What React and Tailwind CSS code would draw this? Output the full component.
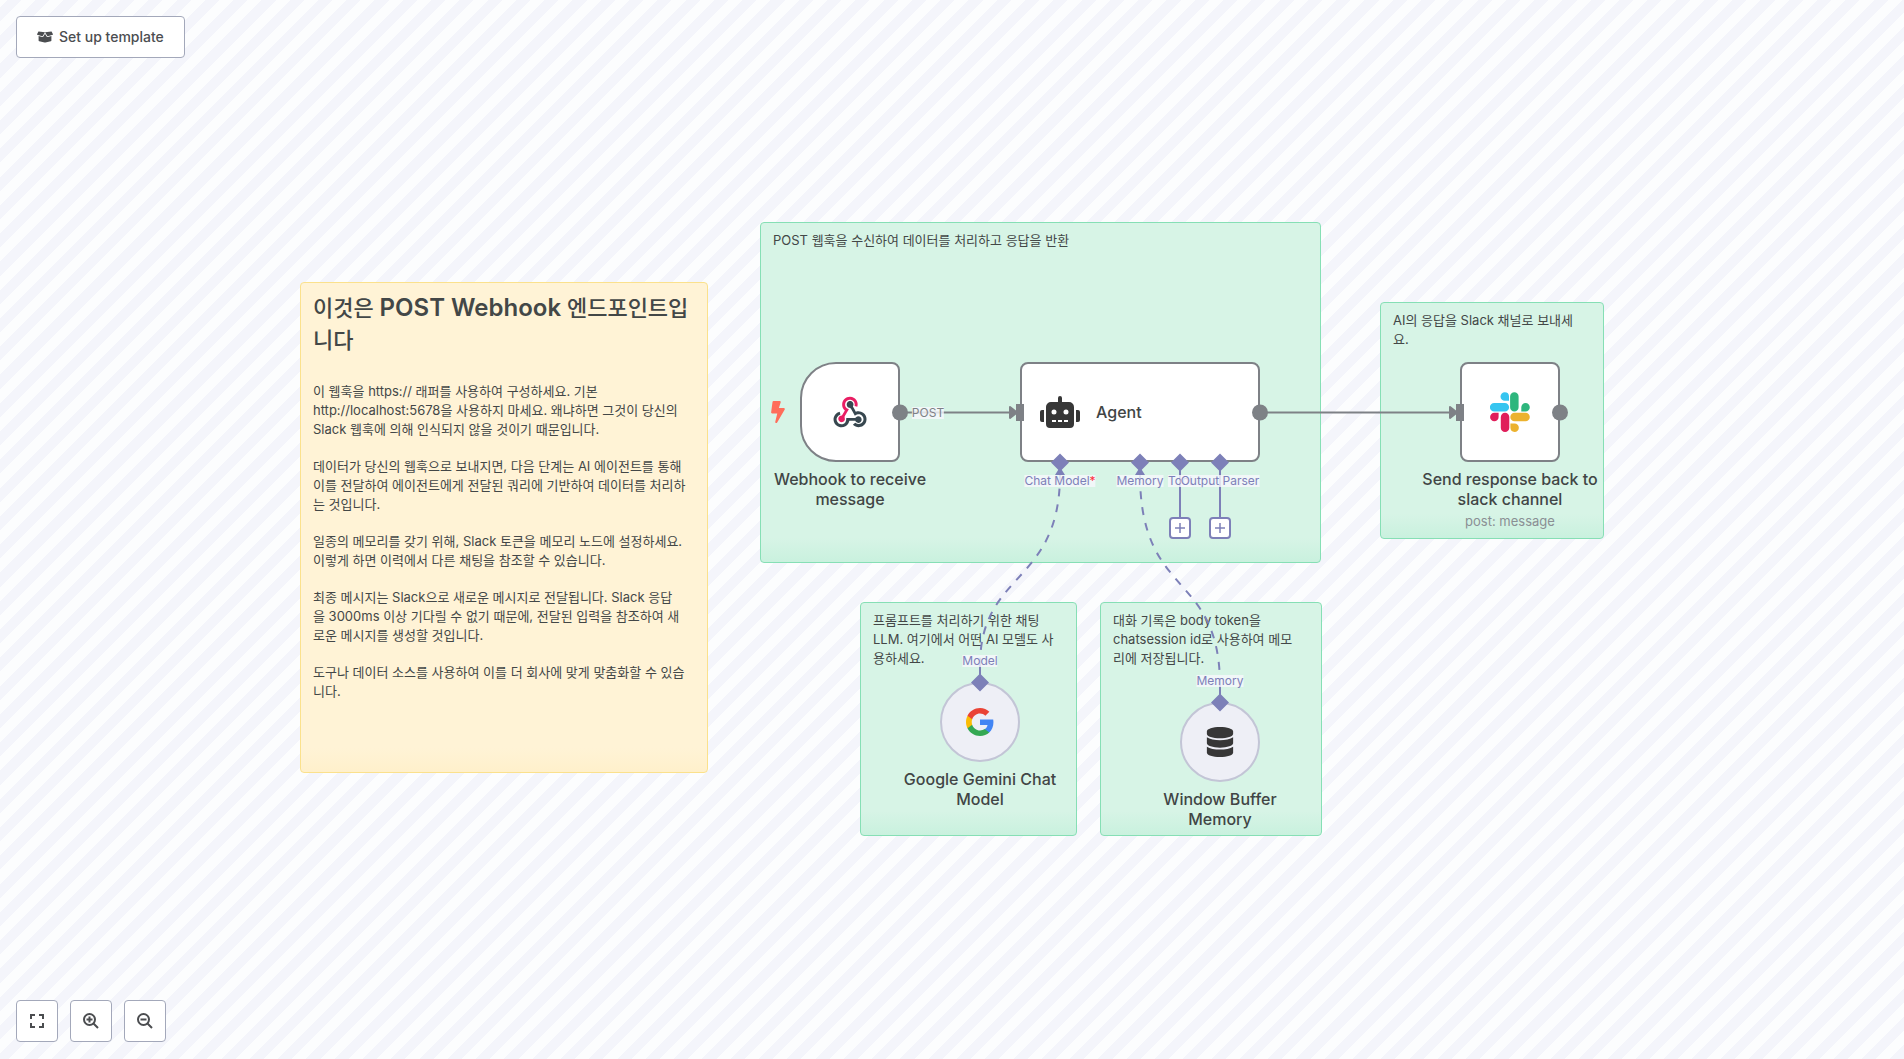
import { FaBoxOpen, FaBolt, FaRobot, FaDatabase } from "react-icons/fa";

const GREEN =
  "border-[#86dfb5] bg-[linear-gradient(to_top,#c9f1de,#d7f4e6_24px)] px-3 py-2";
const YELLOW =
  "border-[#fbe18c] bg-[linear-gradient(to_top,#fff0cb,#fff3d6_24px)] pt-[9px] px-3";
const BOX = "flex h-[100px] items-center rounded-lg border-2 border-[#7e8186] bg-white";
const CIRCLE =
  "flex size-20 items-center justify-center rounded-full border-2 border-[#c3c5d6] bg-[#eeeff6]";

function Note({ className, paragraphs, title }) {
  return (
    <section
      className={`absolute rounded border text-[13px] leading-[19px] text-[#434747] ${className}`}
    >
      {title}
      <div className="flex flex-col gap-[18px] whitespace-pre-line">
        {paragraphs.map((text) => (
          <p key={text}>{text}</p>
        ))}
      </div>
    </section>
  );
}

function Node({ className, title, subtitle, children }) {
  return (
    <article
      className={`absolute flex w-44 -translate-x-1/2 flex-col items-center gap-[7px] text-center text-base leading-5 font-medium text-[#414545] ${className}`}
    >
      {children}
      <div>
        <h2>{title}</h2>
        {subtitle && (
          <p className="mt-1 text-[13px] leading-4 font-normal text-[#8a8f94]">{subtitle}</p>
        )}
      </div>
    </article>
  );
}

function PortLabel({ className, children }) {
  return (
    <span
      className={`absolute -translate-x-1/2 -translate-y-1/2 bg-[#f7f8fc]/80 text-xs leading-3 whitespace-nowrap ${className}`}
    >
      {children}
    </span>
  );
}

function WebhookIcon() {
  return (
    <svg viewBox="0 0 256 240" className="w-[34px]" aria-hidden="true">
      <path
        fill="#e91e63"
        d="M119.5 100.5c-10.1 17-19.9 33.600-29.900 50-2.500 4.200-3.800 7.700-1.800 13 5.600 14.700-2.300 29-17.100 32.900-14 3.700-27.600-5.500-30.400-20.500-2.500-13.300 7.800-26.300 22.400-28.400 1.200-.2 2.500-.2 4.500-.4l22.300-37.400C75.500 95.800 67.100 79.500 69 59.300c1.300-14.300 6.900-26.700 17.200-36.800 19.700-19.400 49.700-22.500 72.900-7.600 22.300 14.300 32.500 42.200 23.800 66.100l-20.400-5.500c2.700-13.300.7-25.200-8.300-35.400-5.900-6.800-13.500-10.300-22.200-11.600-17.400-2.600-34.500 8.500-39.600 25.500-5.700 19.200 3 35 27.100 46.500z"
      />
      <path
        fill="#37474f"
        d="M149.800 79.400c7.300 12.900 14.700 25.900 22 38.800 37.100-11.500 65 9 75.100 31 12.100 26.600 3.800 58-20 74.400-24.400 16.800-55.400 13.900-77-7.700l17-14.300c21.500 13.900 40.200 13.200 54.100-3.200 11.900-14 11.600-34.900-.6-48.600-14.100-15.800-33-16.300-55.800-1.100-9.500-16.800-19.100-33.500-28.300-50.300-3.100-5.700-6.500-9-13.500-10.200-11.600-2-19.100-12-19.600-23.200-.4-11.100 6.100-21.100 16.300-25 10.100-3.900 22-.8 28.800 7.900 5.600 7 7.300 15 4.400 23.600-.8 2.400-1.900 4.700-2.900 7.900z"
      />
      <path
        fill="#37474f"
        d="M167.700 187.200h-44.600c-4.300 17.600-13.500 31.800-29.500 40.900-12.400 7-25.800 9.400-40 7.100C27.500 231 6.200 207.600 4.300 181.200c-2.100-30 18.500-56.600 45.900-62.600l5.700 20.700c-25.200 12.800-33.900 29-26.800 49.200 6.300 17.800 23.900 27.600 42.900 23.800 19.500-3.900 29.300-20 28.100-46.100 18.500 0 37-.2 55.400.1 7.200.1 12.800-.6 18.200-7 9-10.500 25.500-9.500 35.200.4 9.900 10.100 9.400 26.400-1 36.100-10.100 9.300-26 8.800-35.300-1.200-1.900-2.100-3.400-4.600-4.900-7.400z"
      />
    </svg>
  );
}

function SlackIcon() {
  return (
    <svg viewBox="0 0 40 40" className="size-10" aria-hidden="true">
      <path fill="#36c5f0" d="M14.800.2a4.300 4.300 0 0 0 0 8.600h4.200V4.500A4.300 4.300 0 0 0 14.800.2zM4.200 10.900h10.600a4.300 4.300 0 0 1 0 8.600H4.200a4.300 4.300 0 0 1 0-8.600z" />
      <path fill="#2eb67d" d="M39.800 15.200a4.200 4.200 0 0 0-8.500 0v4.300h4.200a4.300 4.300 0 0 0 4.300-4.300zM28.600 15.200V4.400a4.200 4.200 0 0 0-8.500 0v10.800a4.200 4.200 0 0 0 8.500 0z" />
      <path fill="#ecb22e" d="M24.600 39.900a4.200 4.200 0 0 0 0-8.500h-4.200v4.200a4.300 4.300 0 0 0 4.200 4.300zM24.600 29.300h10.900a4.300 4.300 0 0 0 0-8.600H24.600a4.300 4.300 0 0 0 0 8.600z" />
      <path fill="#e01e5a" d="M.1 25a4.200 4.200 0 0 0 8.500 0v-4.300H4.400A4.300 4.300 0 0 0 .1 25zM10.800 25v10.700a4.200 4.200 0 0 0 8.500 0V25a4.200 4.200 0 0 0-8.500 0z" />
    </svg>
  );
}

function GoogleIcon() {
  return (
    <svg viewBox="1 1 22 22" className="size-7" aria-hidden="true">
      <path fill="#4285f4" d="M22.560 12.250c0-.78-.07-1.530-.2-2.250H12v4.260h5.920c-.26 1.370-1.040 2.530-2.210 3.310v2.770h3.570c2.080-1.920 3.280-4.740 3.280-8.090z" />
      <path fill="#34a853" d="M12 23c2.970 0 5.460-.98 7.280-2.660l-3.570-2.770c-.98.66-2.230 1.060-3.710 1.060-2.860 0-5.290-1.930-6.160-4.530H2.180v2.840C3.990 20.530 7.700 23 12 23z" />
      <path fill="#fbbc05" d="M5.840 14.090c-.22-.66-.35-1.360-.35-2.090s.13-1.430.35-2.090V7.070H2.180C1.430 8.550 1 10.220 1 12s.43 3.450 1.180 4.930l3.660-2.840z" />
      <path fill="#ea4335" d="M12 5.380c1.620 0 3.060.56 4.210 1.640l3.150-3.150C17.450 2.090 14.970 1 12 1 7.700 1 3.990 3.470 2.180 7.070l3.660 2.840c.87-2.600 3.300-4.530 6.160-4.530z" />
    </svg>
  );
}

function Connections() {
  return (
    <svg className="pointer-events-none absolute top-0 left-0 h-[1059px] w-[1904px]" fill="none" aria-hidden="true">
      <g stroke="#7e8186" strokeWidth="2">
        <path d="M900 412.500H1012M1260 412.500H1452" />
      </g>
      <g fill="#7e8186">
        <path d="M1010 407l7 5.500-7 5.500zM1450 407l7 5.500-7 5.500z" stroke="#7e8186" strokeWidth="2" strokeLinejoin="round" />
        <rect x="1016" y="404" width="8" height="17" />
        <rect x="1456" y="404" width="8" height="17" />
        <circle cx="900" cy="412.500" r="8" />
        <circle cx="1260" cy="412.500" r="8" />
        <circle cx="1560" cy="412.500" r="8" />
      </g>
      <g stroke="#7d80b8" strokeWidth="2">
        <path strokeDasharray="8 8" d="M980 666C980 570 1060 586 1060 474M1220 686C1220 570 1140 600 1140 474" />
        <path d="M980 666V682M1220 686V702M1180 466V518M1220 466V518" />
      </g>
      <g fill="#7d80b8">
        <path d="M1060 453.500l9 9-9 9-9-9zM1140 453.500l9 9-9 9-9-9zM1180 453.500l9 9-9 9-9-9zM1220 453.500l9 9-9 9-9-9z" />
        <path d="M980 673.500l9 9-9 9-9-9zM1220 693.500l9 9-9 9-9-9z" />
        <path d="M1060 467l5 8h-10zM1140 467l5 8h-10z" />
      </g>
    </svg>
  );
}

function AddButton({ className, label }) {
  return (
    <button
      type="button"
      aria-label={label}
      className={`absolute flex size-[22px] items-center justify-center rounded border-2 border-[#7d80b8] bg-white text-[#7d80b8] ${className}`}
    >
      <svg viewBox="0 0 12 12" className="size-3" fill="none" stroke="currentColor" strokeWidth="1.500">
        <path d="M6 1v10M1 6h10" />
      </svg>
    </button>
  );
}

function ControlButton({ label, children }) {
  return (
    <button
      type="button"
      aria-label={label}
      className="flex size-[42px] items-center justify-center rounded border border-[#a3a8ba] bg-white text-[#4b4d50]"
    >
      {children}
    </button>
  );
}

export default function App() {
  return (
    <div className="relative flex min-h-screen flex-col justify-between overflow-hidden bg-[repeating-linear-gradient(-45deg,#f4f5fb_0px,#f4f5fb_10px,#fcfdfe_10px,#fcfdfe_20px)] px-4 pt-4 pb-[17px] font-[Inter,'Noto_Sans_CJK_KR',sans-serif]">
      <main className="absolute inset-0">
        <Note
          className={`top-[282px] left-[300px] h-[491px] w-[408px] ${YELLOW}`}
          title={
            <h1 className="mb-[26px] text-[22px] leading-8 font-medium">
              이것은 <span className="text-2xl leading-none font-semibold">POST Webhook</span> 엔드포인트입니다
            </h1>
          }
          paragraphs={[
            "이 웹훅을 https:// 래퍼를 사용하여 구성하세요. 기본 http://localhost:5678을 사용하지 마세요. 왜냐하면 그것이 당신의 Slack 웹훅에 의해 인식되지 않을 것이기 때문입니다.",
            "데이터가 당신의 웹훅으로 보내지면, 다음 단계는 AI 에이전트를 통해 이를 전달하여 에이전트에게 전달된 쿼리에 기반하여 데이터를 처리하는 것입니다.",
            "일종의 메모리를 갖기 위해, Slack 토큰을 메모리 노드에 설정하세요. 이렇게 하면 이력에서 다른 채팅을 참조할 수 있습니다.",
            "최종 메시지는 Slack으로 새로운 메시지로 전달됩니다. Slack 응답\n을 3000ms 이상 기다릴 수 없기 때문에, 전달된 입력을 참조하여 새\n로운 메시지를 생성할 것입니다.",
            "도구나 데이터 소스를 사용하여 이를 더 회사에 맞게 맞춤화할 수 있습\n니다.",
          ]}
        />
        <Note
          className={`top-[222px] left-[760px] h-[341px] w-[561px] ${GREEN}`}
          paragraphs={["POST 웹훅을 수신하여 데이터를 처리하고 응답을 반환"]}
        />
        <Note
          className={`top-[302px] left-[1380px] h-[237px] w-[224px] ${GREEN}`}
          paragraphs={["AI의 응답을 Slack 채널로 보내세\n요."]}
        />
        <Note
          className={`top-[602px] left-[860px] h-[234px] w-[217px] ${GREEN}`}
          paragraphs={["프롬프트를 처리하기 위한 채팅\nLLM. 여기에서 어떤 AI 모델도 사\n용하세요."]}
        />
        <Note
          className={`top-[602px] left-[1100px] h-[234px] w-[222px] ${GREEN}`}
          paragraphs={["대화 기록은 body token을\nchatsession id로 사용하여 메모\n리에 저장됩니다."]}
        />

        <FaBolt className="absolute top-[401px] left-[769px] h-[22px] w-[18px] text-[#ff6d5a]" />
        <Node className="top-[362px] left-[850px]" title="Webhook to receive message">
          <div className={`w-[100px] justify-center rounded-l-[36px] ${BOX}`}>
            <WebhookIcon />
          </div>
        </Node>
        <div
          className={`absolute top-[362px] left-[1020px] w-60 gap-4 pl-[18px] text-base font-medium text-[#414545] ${BOX}`}
        >
          <FaRobot className="size-10 text-[#373737]" />
          <h2>Agent</h2>
        </div>
        <Node
          className="top-[362px] left-[1510px]"
          title="Send response back to slack channel"
          subtitle="post: message"
        >
          <div className={`w-[100px] justify-center ${BOX}`}>
            <SlackIcon />
          </div>
        </Node>
        <Node className="top-[682px] left-[980px]" title="Google Gemini Chat Model">
          <div className={CIRCLE}>
            <GoogleIcon />
          </div>
        </Node>
        <Node className="top-[702px] left-[1220px]" title="Window Buffer Memory">
          <div className={CIRCLE}>
            <FaDatabase className="size-[30px] text-[#373737]" />
          </div>
        </Node>

        <Connections />
        <AddButton className="top-[517px] left-[1169px]" label="Add tool" />
        <AddButton className="top-[517px] left-[1209px]" label="Add output parser" />

        <PortLabel className="top-[413px] left-[928px] text-[#7e8186]">POST</PortLabel>
        <PortLabel className="top-[481px] left-[1060px] text-[#7d80b8]">
          Chat Model<span className="text-[#ff2d3d]">*</span>
        </PortLabel>
        <PortLabel className="top-[481px] left-[1140px] text-[#7d80b8]">Memory</PortLabel>
        <PortLabel className="top-[481px] left-[1180px] text-[#7d80b8]">Tool</PortLabel>
        <PortLabel className="top-[481px] left-[1220px] text-[#7d80b8]">Output Parser</PortLabel>
        <PortLabel className="top-[661px] left-[980px] text-[#7d80b8]">Model</PortLabel>
        <PortLabel className="top-[681px] left-[1220px] text-[#7d80b8]">Memory</PortLabel>
      </main>

      <header className="relative flex">
        <button
          type="button"
          className="flex h-[42px] items-center gap-[6px] rounded border border-[#a3a8ba] bg-white px-5 text-sm font-medium text-[#4b4d50]"
        >
          <FaBoxOpen className="size-4" />
          Set up template
        </button>
      </header>
      <nav className="relative flex gap-3" aria-label="Canvas controls">
        <ControlButton label="Zoom to fit">
          <svg viewBox="0 0 14 14" className="size-3.5" fill="none" stroke="currentColor" strokeWidth="2">
            <path d="M1 5V1h4M9 1h4v4M13 9v4H9M5 13H1V9" />
          </svg>
        </ControlButton>
        <ControlButton label="Zoom in">
          <svg viewBox="0 0 16 16" className="size-4" fill="none" stroke="currentColor" strokeWidth="2">
            <circle cx="6.500" cy="6.500" r="5.500" />
            <path d="M10.500 10.500l4.500 4.500M6.500 3.500v6M3.500 6.500h6" />
          </svg>
        </ControlButton>
        <ControlButton label="Zoom out">
          <svg viewBox="0 0 16 16" className="size-4" fill="none" stroke="currentColor" strokeWidth="2">
            <circle cx="6.500" cy="6.500" r="5.500" />
            <path d="M10.500 10.500l4.500 4.500M3.500 6.500h6" />
          </svg>
        </ControlButton>
      </nav>
    </div>
  );
}
